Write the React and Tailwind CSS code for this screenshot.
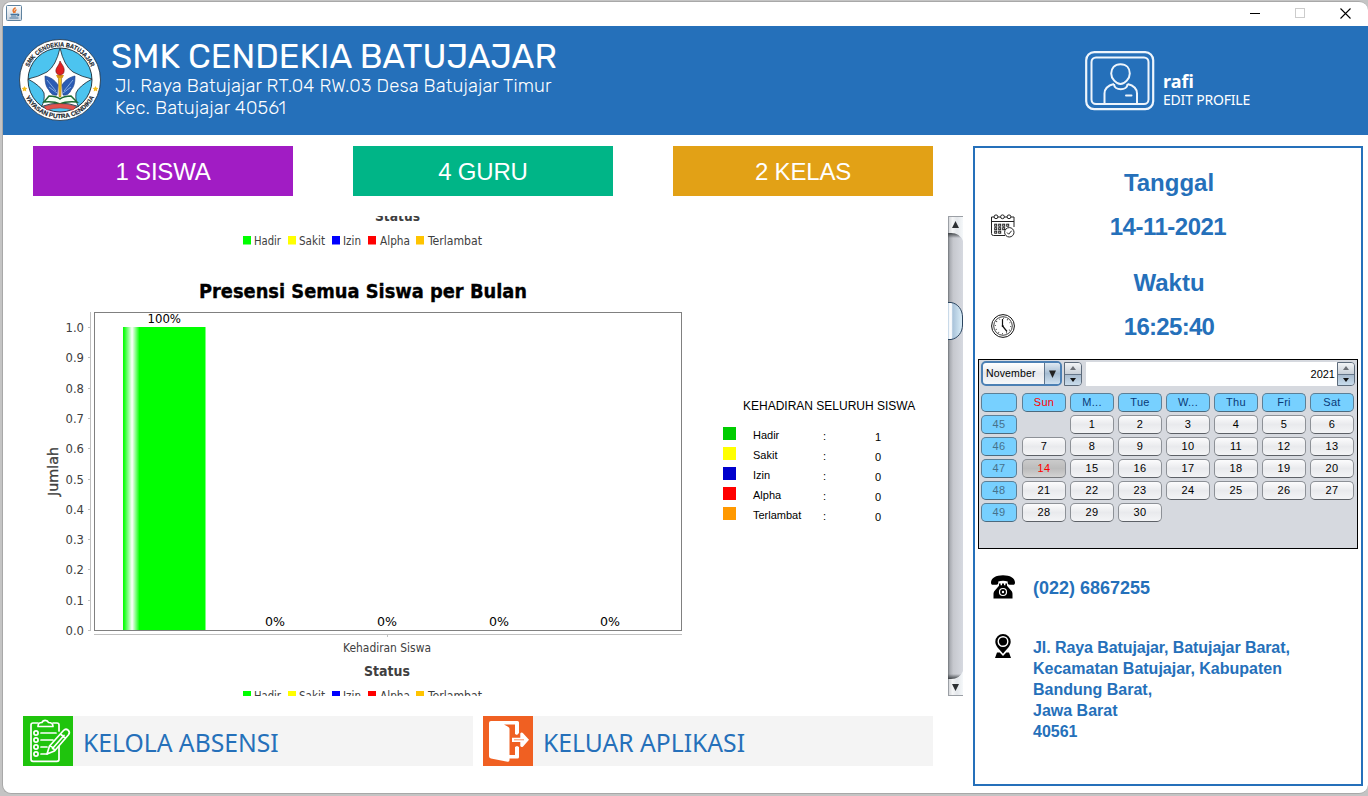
import React from "react";

const ARIAL = "font-['Liberation_Sans',Arial,sans-serif]";

const stats = [
  { label: "1 SISWA", cls: "bg-[#a11cc4]" },
  { label: "4 GURU", cls: "bg-[#00b587]" },
  { label: "2 KELAS", cls: "bg-[#e2a116]" },
];

const series = [
  { name: "Hadir", color: "#00ff00", x: 243, tx: 254, w: 27 },
  { name: "Sakit", color: "#ffff00", x: 288, tx: 299, w: 26 },
  { name: "Izin", color: "#0000ff", x: 332, tx: 343, w: 18 },
  { name: "Alpha", color: "#ff0000", x: 368, tx: 380, w: 30 },
  { name: "Terlambat", color: "#ffc400", x: 416, tx: 428, w: 54 },
];

const recap = [
  { name: "Hadir", cls: "bg-[#00cc00]", value: 1 },
  { name: "Sakit", cls: "bg-[#ffff00]", value: 0 },
  { name: "Izin", cls: "bg-[#0000cc]", value: 0 },
  { name: "Alpha", cls: "bg-[#ff0000]", value: 0 },
  { name: "Terlambat", cls: "bg-[#ff9900]", value: 0 },
];

const weeks = [
  [45, "", 1, 2, 3, 4, 5, 6],
  [46, 7, 8, 9, 10, 11, 12, 13],
  [47, 14, 15, 16, 17, 18, 19, 20],
  [48, 21, 22, 23, 24, 25, 26, 27],
  [49, 28, 29, 30, "", "", "", ""],
];

function JavaIcon() {
  return (
    <svg width="16" height="16" viewBox="0 0 16 16">
      <defs>
        <linearGradient id="jv" x1="0" y1="0" x2="0" y2="1">
          <stop offset="0" stopColor="#fdfdfd" />
          <stop offset="1" stopColor="#c9d3de" />
        </linearGradient>
      </defs>
      <rect x="0.5" y="0.5" width="15" height="15" rx="1" fill="url(#jv)" stroke="#5f829f" />
      <path d="M9.600 2.600C6 5 7 5.700 8.200 8M10.500 4.600C8.300 5.600 8.800 6.500 9 7.800" fill="none" stroke="#e8742c" strokeWidth="1.500" />
      <path d="M4.500 9.300h6.500M5 11h5.500M3.500 13h9M11 9.300c2.500-.6 2.200 1.400.2 1.600" fill="none" stroke="#42729c" strokeWidth="1.200" />
    </svg>
  );
}

function SchoolLogo() {
  return (
    <svg width="82" height="82" viewBox="0 0 82 82">
      <defs>
        <path id="arcTop" d="M7.500 41A33.500 33.500 0 0 1 74.500 41" />
        <path id="arcBottom" d="M2.700 41A38.300 38.300 0 0 0 79.300 41" />
      </defs>
      <circle cx="41" cy="41" r="40.500" fill="#fff" stroke="#1d3040" strokeWidth="0.8" />
      <circle cx="41" cy="41" r="32" fill="#4cc4ef" stroke="#16252f" strokeWidth="0.9" />
      <path
        d="M41 9Q45 27 54 33Q63 38 73 40Q60 47 57 54Q56 62 59.500 67.500Q50 64 41 64Q32 64 22.500 67.500Q26 62 25 54Q22 47 9 40Q19 38 28 33Q37 27 41 9Z"
        fill="#fff" stroke="#16252f" strokeWidth="0.8"
      />
      <path d="M26 37C31 38 36 41 39 46L38 56C34 57 31 54 30 51C27 48 26 44 26 37Z" fill="#2b5cb4" stroke="#173a80" strokeWidth="0.6" />
      <path d="M56 37C51 38 46 41 43 46L44 56C48 57 51 54 52 51C55 48 56 44 56 37Z" fill="#2b5cb4" stroke="#173a80" strokeWidth="0.6" />
      <path d="M28 41l9 11M30 48l8 6M54 41l-9 11M52 48l-8 6" stroke="#9cc0ee" strokeWidth="0.800" />
      <path d="M39.300 37h3.400l-.8 21h-1.800Z" fill="#f2c21c" stroke="#74501a" strokeWidth="0.5" />
      <path d="M37 36h8l-1.500 3h-5Z" fill="#d89417" />
      <path d="M41 22C43 26 46 28 45 33C44 37 38 37 37 33C36 29 40 27 41 22Z" fill="#df1f22" stroke="#6c1111" strokeWidth="0.6" />
      <path d="M25 63L30 57Q37 57 41 60Q45 57 52 57L58 63Q47 62 41 65Q35 62 25 63Z" fill="#f3fff3" stroke="#1c6a32" strokeWidth="1.500" />
      <path d="M25 67.500Q41 62 57 67.500L54 71Q41 67 28 71Z" fill="#e0534e" stroke="#b02c28" strokeWidth="0.500" />
      <path d="M5.500 47l.9 1.800 2 .2-1.500 1.400.4 2-1.800-1-1.800 1 .4-2-1.500-1.400 2-.2zM76.500 47l.9 1.800 2 .2-1.500 1.400.4 2-1.800-1-1.800 1 .4-2-1.500-1.400 2-.2z" fill="#f6bd1d" />
      <g fontFamily="Liberation Sans, Arial, sans-serif" fontWeight="700" fontSize="6.300" fill="#18242c" stroke="#18242c" strokeWidth="0.150">
        <text><textPath href="#arcTop" startOffset="13" textLength="79" lengthAdjust="spacingAndGlyphs">SMK CENDEKIA BATUJAJAR</textPath></text>
        <text><textPath href="#arcBottom" startOffset="17.500" textLength="85" lengthAdjust="spacingAndGlyphs">YAYASAN PUTRA CENDIKIA</textPath></text>
      </g>
    </svg>
  );
}

function ProfileIcon() {
  return (
    <svg width="70" height="60" viewBox="0 0 70 60" fill="none" stroke="#eef5fc">
      <rect x="1.200" y="1.200" width="67" height="57" rx="8" strokeWidth="2.200" />
      <rect x="6.500" y="6.500" width="57" height="46.500" rx="4.500" strokeWidth="2" />
      <path d="M35.500 13.200c6 0 9.300 4 9.300 9.300 0 5-5 10.500-9.300 10.500s-9.300-5.500-9.300-10.500c0-5.300 3.300-9.300 9.300-9.300z" strokeWidth="2" />
      <path d="M19.500 52v-9.500c0-5.500 3.500-8 9.500-9.500M52 52v-9.500c0-5.500-3.500-8-9.500-9.500M29 33c0 7 13.500 7 13.500 0" strokeWidth="2" />
      <path d="M41 44.500h5.500" strokeWidth="2" strokeLinecap="round" />
    </svg>
  );
}

function CalendarIcon() {
  const dots = [[4.500, 11], [8.500, 11], [12.500, 11], [16.500, 11], [4.500, 14.500], [8.500, 14.500], [12.500, 14.500], [4.500, 18], [8.500, 18]];
  return (
    <svg width="24" height="24" viewBox="0 0 24 24" fill="none" stroke="#222" strokeWidth="1">
      <path d="M14 21.500H2.500a2 2 0 0 1-2-2V3h22.500v10M.5 7.500H23" />
      {[5, 11.500, 18].map((x) => <circle key={x} cx={x} cy="2.800" r="1.900" fill="#fff" />)}
      {dots.map(([x, y]) => <rect key={x + "-" + y} x={x - 0.800} y={y - 0.800} width="2" height="2" />)}
      <circle cx="18.300" cy="18.300" r="4.700" fill="#fff" />
      <path d="M16 18.500l1.700 1.700 3-3.500" />
    </svg>
  );
}

function ClockIcon() {
  return (
    <svg width="24" height="24" viewBox="0 0 24 24" fill="none" stroke="#111">
      <circle cx="12" cy="12" r="11.400" strokeWidth="1" />
      <circle cx="12" cy="12" r="9.300" strokeWidth="0.800" />
      <circle cx="12" cy="12" r="7.600" strokeWidth="1.200" strokeDasharray="0.700 3.280" />
      <path d="M11.500 5v7l4.500 5.500" strokeWidth="1.200" />
      <circle cx="11.700" cy="12" r="1" fill="#111" stroke="none" />
    </svg>
  );
}

function PhoneIcon() {
  return (
    <svg width="24" height="24" viewBox="0 0 24 24">
      <path d="M0 7.500C0 3 5 .2 12 .2S24 3 24 7.500c0 1.500-.6 2.300-2 2.300h-3.400c-1.300 0-1.900-.8-1.900-2V6.500c-3-.9-6.400-.9-9.400 0v1.300c0 1.200-.6 2-1.900 2H2C.6 9.800 0 9 0 7.500z" />
      <path d="M8 8.500h1.600v1.800h1.400V8.500h2v1.800h1.400V8.500H16v2.300l4.300 5c1 1.200 1.200 2.100 1.200 3.700v4h-19v-4c0-1.600.2-2.500 1.200-3.700l4.300-5z" />
      <circle cx="12" cy="17" r="3.500" fill="none" stroke="#fff" strokeWidth="1.200" />
      <circle cx="12" cy="17" r="1.200" fill="#fff" />
    </svg>
  );
}

function PinIcon() {
  return (
    <svg width="16" height="24" viewBox="0 0 16 24">
      <path d="M8 0a7.700 7.700 0 0 1 7.700 7.700c0 4.300-4 7.500-7.700 12-3.700-4.500-7.700-7.700-7.700-12A7.700 7.700 0 0 1 8 0z" />
      <circle cx="8" cy="7.500" r="4.800" fill="none" stroke="#fff" strokeWidth="1.400" />
      <path d="M0 24l2-5.500h2.700L8 22l3.300-3.500H14L16 24z" />
    </svg>
  );
}

function ChecklistIcon() {
  return (
    <svg width="50" height="50" viewBox="0 0 50 50" fill="none" stroke="#fff" strokeWidth="1.700" strokeLinecap="round" strokeLinejoin="round">
      <rect width="50" height="50" fill="#1fc40d" stroke="none" />
      <path d="M36 30v13.300a2 2 0 0 1-2 2H10a2 2 0 0 1-2-2V9a2 2 0 0 1 2-2h5M30 7h4a2 2 0 0 1 2 2v6" />
      <path d="M15 10.500c0-3 1-4 4-4 1-2.800 5.500-2.800 6.500 0 3 0 4.500 1 4.500 4z" />
      {[17, 24, 31, 38].map((y) => (
        <g key={y}>
          <circle cx="13" cy={y} r="2.100" />
          <path d={y < 20 ? "M18 17h15" : y < 28 ? "M18 24h12" : y < 34 ? "M18 31h6" : "M18 38h6"} />
        </g>
      ))}
      <path d="M24 38l2.500-8L40.500 14.500c3-3.200 7.500 1 5 4.300L31.500 35zM26.500 30c2 .4 4.500 2 5 5M37.500 18l5 4.500M29.500 32.500L41 19.500" fill="#1fc40d" />
    </svg>
  );
}

function ExitIcon() {
  return (
    <svg width="50" height="50" viewBox="0 0 50 50">
      <rect width="50" height="50" fill="#f06022" />
      <path d="M8 5h26.500a1.500 1.500 0 0 1 1.500 1.500V17l-2 2-2-1V8.500H21l4 2.200c1 .6 1.500 1.300 1.500 2.300v26h5.500V31l2-1 2 1v10a1.500 1.500 0 0 1-1.500 1.500h-8V44a1.700 1.700 0 0 1-2 1.700L8 42.500a2.400 2.400 0 0 1-2-2.300V7a2 2 0 0 1 2-2z" fill="#fff" />
      <path d="M29 21.700h8.300v-4.200c.6-1.300 2-1.200 2.800-.3l5.900 6.600-5.900 6.600c-.8.900-2.200 1-2.800-.3v-4.200H29z" fill="#fff" />
      <path d="M31 23.800h10" stroke="#f06022" strokeWidth="0.700" />
    </svg>
  );
}

function Legend({ y }) {
  return series.map((s) => (
    <g key={s.name}>
      <rect x={s.x} y={y - 8.500} width="8" height="8.500" fill={s.color} />
      <text x={s.tx} y={y} fontSize="12" textLength={s.w} lengthAdjust="spacingAndGlyphs" fill="#404040">{s.name}</text>
    </g>
  ));
}

function AttendanceChart() {
  const ticks = Array.from({ length: 11 }, (_, i) => i);
  return (
    <svg width="680" height="480" viewBox="33 216 680 480" fontFamily="'DejaVu Sans Condensed', 'DejaVu Sans', sans-serif">
      <defs>
        <linearGradient id="bar" x1="0" x2="1" y1="0" y2="0">
          <stop offset="0" stopColor="#00ff00" />
          <stop offset="0.020" stopColor="#20ff20" />
          <stop offset="0.110" stopColor="#fff" />
          <stop offset="0.200" stopColor="#00ff00" />
          <stop offset="1" stopColor="#00ff00" />
        </linearGradient>
      </defs>
      <text x="375" y="220.500" fontSize="14" fontWeight="700" textLength="45" lengthAdjust="spacingAndGlyphs" fill="#404040">Status</text>
      <Legend y={244.500} />
      <text x="199" y="298" fontSize="20" fontWeight="700" textLength="328" lengthAdjust="spacingAndGlyphs" fill="#000" stroke="#000" strokeWidth="0.350">Presensi Semua Siswa per Bulan</text>
      <rect x="94.500" y="312.500" width="587" height="318" fill="#fff" stroke="#808080" />
      <path d="M90.500 312v319M94 634.500h588M387.500 634v3" stroke="#c0c0c0" fill="none" />
      {ticks.map((i) => {
        const y = 630.500 - i * 30.300;
        return (
          <g key={i}>
            <path d={`M88 ${Math.floor(y) + 0.500}h3`} stroke="#c0c0c0" />
            <text x="65.500" y={y + 4.500} fontSize="12.500" textLength="18.500" lengthAdjust="spacingAndGlyphs" fill="#404040">{(i / 10).toFixed(1)}</text>
          </g>
        );
      })}
      <rect x="123" y="327" width="82.500" height="303" fill="url(#bar)" />
      <text x="147.500" y="323" fontSize="12" textLength="33.500" lengthAdjust="spacingAndGlyphs" fill="#000">100%</text>
      {[265, 377, 489, 600].map((x) => (
        <text key={x} x={x} y="626" fontSize="12" textLength="20" lengthAdjust="spacingAndGlyphs" fill="#000">0%</text>
      ))}
      <text transform="translate(58 496) rotate(-90)" fontSize="14" textLength="49" lengthAdjust="spacingAndGlyphs" fill="#404040" stroke="#404040" strokeWidth="0.300">Jumlah</text>
      <text x="343" y="652" fontSize="12" textLength="88" lengthAdjust="spacingAndGlyphs" fill="#404040">Kehadiran Siswa</text>
      <text x="364" y="676" fontSize="14" fontWeight="700" textLength="46" lengthAdjust="spacingAndGlyphs" fill="#404040">Status</text>
      <Legend y={699.500} />
    </svg>
  );
}

function ScrollBar() {
  return (
    <svg width="15" height="480" viewBox="0 0 15 480">
      <defs>
        <linearGradient id="trk" x1="0" x2="1" y1="0" y2="0">
          <stop offset="0" stopColor="#6f7378" />
          <stop offset="0.120" stopColor="#a8abb1" />
          <stop offset="0.350" stopColor="#c6c8ce" />
          <stop offset="1" stopColor="#d6d9e0" />
        </linearGradient>
        <linearGradient id="thm" x1="0" x2="1" y1="0" y2="0">
          <stop offset="0" stopColor="#b4cbe0" />
          <stop offset="0.120" stopColor="#fff" />
          <stop offset="0.280" stopColor="#f2f6fa" />
          <stop offset="0.320" stopColor="#a9c3da" />
          <stop offset="0.950" stopColor="#d8ecf7" />
        </linearGradient>
        <linearGradient id="cap" x1="0" x2="1" y1="0" y2="0">
          <stop offset="0" stopColor="#d0d2d6" />
          <stop offset="0.300" stopColor="#f4f5f6" />
          <stop offset="0.600" stopColor="#e4e7eb" />
          <stop offset="1" stopColor="#f5f8fa" />
        </linearGradient>
        <linearGradient id="shT" x1="0" x2="0" y1="0" y2="1">
          <stop offset="0" stopColor="#34383c" stopOpacity="0.900" />
          <stop offset="1" stopColor="#34383c" stopOpacity="0" />
        </linearGradient>
        <linearGradient id="shB" x1="0" x2="0" y1="1" y2="0">
          <stop offset="0" stopColor="#34383c" stopOpacity="0.900" />
          <stop offset="1" stopColor="#34383c" stopOpacity="0" />
        </linearGradient>
      </defs>
      <rect width="15" height="480" fill="url(#trk)" />
      <path d="M0 17H7Q11 18 13 22H0Z" fill="url(#shT)" />
      <path d="M0 463H7Q11 462 13 458H0Z" fill="url(#shB)" />
      <path d="M0 0H15V25Q12 17 3 17H0Z" fill="url(#cap)" />
      <path d="M0 480H15V455Q12 463 3 463H0Z" fill="url(#cap)" />
      <path d="M0 .5H15M0 479.500H15M.5 0V17M.5 463V480" stroke="#9b9fa5" />
      <path d="M4 12h7L7.500 5z M4 468h7L7.500 475z" fill="#2d3033" />
      <path d="M0 90.500H3C10 91.500 14.500 98 14.500 105C14.500 112 10 122.500 3 123.500H0" fill="none" />
      <path d="M0 86.500H3C10 87.500 14.500 94 14.500 101V109C14.500 116 10 122.500 3 123.500H0" fill="url(#thm)" stroke="#2b4560" />
    </svg>
  );
}

function Spinner() {
  return (
    <div className="flex h-6 w-[18px] shrink-0 flex-col overflow-hidden rounded-r-[4px] border border-[#5d6b7b] text-[#222]">
      <div className="flex flex-1 items-center justify-center border-b border-[#66778b] bg-linear-to-b from-[#f2f4f6] to-[#c9d0d8]">
        <svg width="6" height="4" viewBox="0 0 6 4"><path d="M0 4h6L3 0z" fill="#6c7076" /></svg>
      </div>
      <div className="flex flex-1 items-center justify-center bg-linear-to-b from-[#a9bccf] to-[#c9dcec]">
        <svg width="6" height="4" viewBox="0 0 6 4"><path d="M0 0h6L3 4z" fill="#111" /></svg>
      </div>
    </div>
  );
}

const cellBase = "flex h-[19px] items-center justify-center rounded-[5px] border border-b-[1.5px] text-[11px] leading-none tracking-[0.300px] ";
const blue = "border-[#5c7f96] border-b-[#4c6a7e] bg-[#77d0ff] ";
const plain = "border-[#8d9197] border-b-[#5d6167] bg-linear-to-b from-[#fcfcfd] via-[#e9eaed] to-[#f3f4f6] ";
const picked = "border-[#8d9197] border-b-[#77797d] bg-linear-to-b from-[#cbcbcb] via-[#bcbcbc] to-[#d3d3d3] text-[#f00] ";

function MiniCalendar() {
  return (
    <div className={ARIAL + " h-[190px] w-[380px] border border-black bg-[#d6d9df] font-normal text-black"}>
      <div className="flex h-[28px] items-start pl-px pt-[2px]">
        <div className="-mt-px ml-px flex h-[25px] w-[81px] items-center rounded-[5px] border-2 border-[#4c80b4] bg-linear-to-b from-white via-[#e7e9ed] to-[#f6f7f9]">
          <span className="flex-1 pl-[3px] text-[10.500px] tracking-[0.150px]">November</span>
          <span className="flex h-full w-[16px] items-center justify-center rounded-r-[3px] border-l border-[#60758c] bg-linear-to-b from-[#dfe9f2] via-[#a5bcd2] to-[#cfe1f0]">
            <svg width="7" height="8" viewBox="0 0 7 8"><path d="M0 .5h7L3.500 8z" fill="#222" /></svg>
          </span>
        </div>
        <div className="w-[2px]" />
        <Spinner />
        <div className="ml-1 flex h-6 w-[251px] items-center justify-end bg-white pr-[2px] text-[11px]">2021</div>
        <Spinner />
      </div>
      <div className="mt-[5px] grid grid-cols-[36px_repeat(7,44px)] gap-x-1 gap-y-[3px] pl-[2px]">
        <div className={cellBase + blue} />
        {["Sun", "M...", "Tue", "W...", "Thu", "Fri", "Sat"].map((d, i) => (
          <div key={d + i} className={cellBase + blue + (i === 0 ? "ml-px -mr-px text-[#f00]" : "ml-px -mr-px text-[#0a3a78]")}>{d}</div>
        ))}
        {weeks.flatMap((row, r) =>
          row.map((v, c) =>
            v === "" ? (
              <div key={r + "-" + c} />
            ) : (
              <div key={r + "-" + c} className={cellBase + (c === 0 ? blue + "text-[#46718c]" : (v === 14 ? picked : plain) + "ml-px -mr-px")}>{v}</div>
            )
          )
        )}
      </div>
    </div>
  );
}

function InfoPanel() {
  return (
    <aside className={ARIAL + " flex h-[640px] w-[390px] flex-col border-2 border-[#2570ba] pl-[3px] font-bold text-[#2570ba]"}>
      <div className="grid h-[211px] grid-cols-[50px_282px_1fr] grid-rows-[44px_56px_56px_44px] content-start pt-[13px] text-center text-[24px] leading-none">
        <span />
        <span className="pt-[10px]">Tanggal</span>
        <span />
        <span className="pl-[13px] pt-[9px]"><CalendarIcon /></span>
        <span className="pr-[2px] pt-[10px] tracking-[-0.500px]">14-11-2021</span>
        <span />
        <span />
        <span className="pt-[10px]">Waktu</span>
        <span />
        <span className="-mt-[3px] pl-[13px]"><ClockIcon /></span>
        <span className="-mt-[2px] tracking-[-0.700px]">16:25:40</span>
        <span />
      </div>
      <MiniCalendar />
      <div className="mt-[25px] flex items-center gap-[18px] pl-[13px] text-[18px] leading-6">
        <PhoneIcon />
        <span className="pt-[2px]">(022) 6867255</span>
      </div>
      <div className="mt-[34px] flex gap-[22px] pl-[17px] text-[16px] leading-[21px]">
        <PinIcon />
        <address className="pt-[3px] not-italic">
          <span className="tracking-[-0.080px]">Jl. Raya Batujajar, Batujajar Barat,</span><br />Kecamatan Batujajar, Kabupaten<br />Bandung Barat,<br />Jawa Barat<br />40561
        </address>
      </div>
    </aside>
  );
}

function ActionButton({ icon, label }) {
  return (
    <button className="flex h-[50px] w-[450px] items-center bg-[#f4f4f4] font-['Noto_Sans','Open_Sans',sans-serif] text-[24.700px] text-[#2570ba]">
      {icon}
      <span className="pl-[10px] pt-[3px]">{label}</span>
    </button>
  );
}

export default function App() {
  return (
    <div className="h-[796px] w-[1368px] overflow-hidden bg-[#c4c4c4] pl-[2px] pt-px">
      <div className="flex h-[793px] w-[1366px] flex-col overflow-hidden rounded-[9px] border border-r-0 border-[#a8a8a8] bg-white">
        <div className="flex h-6 shrink-0 items-center justify-between pl-[3px] pr-[17px]">
          <div className="-mt-[2px]"><JavaIcon /></div>
          <div className="-mt-[2px] flex items-center gap-[35px]">
            <svg width="10" height="10" viewBox="0 0 10 10"><path d="M0 5.500h10" stroke="#000" /></svg>
            <svg width="10" height="10" viewBox="0 0 10 10"><rect x=".5" y=".5" width="9" height="9" fill="none" stroke="#ccc" /></svg>
            <svg width="11" height="11" viewBox="0 0 11 11"><path d="M.5.5l10 10M10.500.5l-10 10" stroke="#000" strokeWidth="1.100" /></svg>
          </div>
        </div>
        <header className="flex h-[109px] shrink-0 bg-[#2570ba] pl-4 text-white">
          <div className="pt-[13px]"><SchoolLogo /></div>
          <div className="w-[985px] pl-[10px] pt-[13px] font-['Rubik',Roboto,sans-serif] font-light">
            <h1 className="text-[34.200px] font-normal leading-[36px]">SMK CENDEKIA BATUJAJAR</h1>
            <p className="pl-[4px] text-[18.500px] leading-[22px] tracking-[0.130px]">Jl. Raya Batujajar RT.04 RW.03 Desa Batujajar Timur<br />Kec. Batujajar 40561</p>
          </div>
          <div className="-ml-[1px] flex gap-2 pt-[25px]">
            <ProfileIcon />
            <div className="pt-[20px] font-['Noto_Sans','Open_Sans',sans-serif]">
              <div className="text-[18px] font-bold leading-5">rafi</div>
              <div className="text-[14px] leading-[17px] tracking-[-0.200px]">EDIT PROFILE</div>
            </div>
          </div>
        </header>
        <main className="flex flex-1 pt-[11px]">
          <section className="w-[970px]">
            <div className={ARIAL + " flex gap-[60px] pl-[30px] text-[24px] tracking-[-0.200px] text-white"}>
              {stats.map((s) => (
                <div key={s.label} className={"flex h-[50px] w-[260px] items-center justify-center pt-px " + s.cls}>{s.label}</div>
              ))}
            </div>
            <div className="mt-5 flex h-[480px] pl-[30px]">
              <AttendanceChart />
              <div className={ARIAL + " w-[235px] pl-[10px] pt-[183px] text-[11px] text-black"}>
                <h2 className="pl-5 text-[12px] leading-[14px]">KEHADIRAN SELURUH SISWA</h2>
                <div className="mt-[12px]">
                  {recap.map((r) => (
                    <div key={r.name} className="grid h-5 grid-cols-[30px_70px_50px_10px] leading-5">
                      <span className={"mt-[2px] size-[13px] " + r.cls} />
                      <span>{r.name}</span>
                      <span className="pt-px">:</span>
                      <span className="pl-[2px] pt-[2px]">{r.value}</span>
                    </div>
                  ))}
                </div>
              </div>
              <ScrollBar />
            </div>
            <div className="mt-5 flex gap-[10px] pl-5">
              <ActionButton icon={<ChecklistIcon />} label="KELOLA ABSENSI" />
              <ActionButton icon={<ExitIcon />} label="KELUAR APLIKASI" />
            </div>
          </section>
          <InfoPanel />
        </main>
      </div>
    </div>
  );
}
